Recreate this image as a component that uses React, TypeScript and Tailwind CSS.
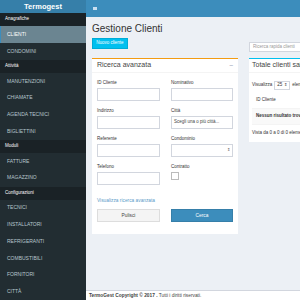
import React from "react";

const sections: { title: string; items: string[] }[] = [
  { title: "Anagrafiche", items: ["CLIENTI", "CONDOMINI"] },
  { title: "Attività", items: ["MANUTENZIONI", "CHIAMATE", "AGENDA TECNICI", "BIGLIETTINI"] },
  { title: "Moduli", items: ["FATTURE", "MAGAZZINO"] },
  { title: "Configurazioni", items: ["TECNICI", "INSTALLATORI", "REFRIGERANTI", "COMBUSTIBILI", "FORNITORI", "CITTÀ"] },
];

function Field({ label, children }: { label: string; children?: React.ReactNode }) {
  return (
    <div className="flex flex-col">
      <div className="h-[6px] flex items-center text-[4.5px] text-[#333] mb-[1.5px]">{label}</div>
      {children ?? <div className="h-[13px] border border-[#d2d6de] bg-white" />}
    </div>
  );
}

export default function App() {
  return (
    <div
      className="w-[300px] h-[300px] overflow-hidden flex bg-[#ecf0f5]"
      style={{ fontFamily: '"Liberation Sans", Arial, sans-serif' }}
    >
      {/* Sidebar */}
      <div className="w-[86px] shrink-0 flex flex-col bg-[#222d32]">
        <div className="h-[16.7px] bg-[#367fa9] flex items-center justify-center text-white font-bold text-[7.5px]">
          Termogest
        </div>
        {sections.map((s) => (
          <div key={s.title} className="flex flex-col">
            <div className="h-[13.3px] bg-[#1a2226] flex items-center pl-[5px] text-[4.5px] text-white">
              {s.title}
            </div>
            {s.items.map((it) => {
              const active = it === "CLIENTI";
              return (
                <div
                  key={it}
                  className={
                    active
                      ? "h-[16.7px] shrink-0 flex items-center pl-[6px] text-[5px] text-white bg-[#6b8591] border-l border-[#3c8dbc]"
                      : "h-[16.7px] shrink-0 flex items-center pl-[7px] text-[5px] text-[#b8c7ce]"
                  }
                >
                  {it}
                </div>
              );
            })}
          </div>
        ))}
      </div>

      {/* Main */}
      <div className="flex-1 flex flex-col min-w-0">
        <div className="h-[16.7px] shrink-0 bg-[#3c8dbc] flex items-center pl-[7px]">
          <div className="w-[3.5px] h-[3px] bg-[#c9dff0]" />
        </div>
        <div className="flex-1 flex flex-col pl-[6px] pt-[5px] overflow-hidden">
          <div className="h-[14px] flex items-center text-[10px] text-[#333] leading-none">Gestione Clienti</div>
          <div className="flex gap-[11px] mt-[2.5px]">
            {/* Left column */}
            <div className="w-[146px] shrink-0 flex flex-col">
              <div className="h-[19.5px]">
                <div className="w-[36px] h-[11px] bg-[#00c0ef] border border-[#00acd6] flex items-center justify-center text-white text-[4.5px]">
                  Nuovo cliente
                </div>
              </div>
              <div className="bg-white border-t-[1.7px] border-[#f39c12] flex flex-col">
                <div className="h-[14.5px] flex items-center justify-between px-[5px] border-b border-[#f4f4f4]">
                  <span className="text-[7px] text-[#444]">Ricerca avanzata</span>
                  <span className="text-[7px] text-[#97a0b3] leading-none">−</span>
                </div>
                <div className="px-[5px] pt-[7px] pb-[12px] flex flex-col">
                  <div className="grid grid-cols-[63px_62px] gap-x-[11px] gap-y-[7.5px]">
                    <Field label="ID Cliente" />
                    <Field label="Nominativo" />
                    <Field label="Indirizzo" />
                    <Field label="Città">
                      <div className="h-[13px] border border-[#d2d6de] bg-white flex items-center pl-[2px] text-[4.5px] text-[#444]">
                        Scegli una o più città...
                      </div>
                    </Field>
                    <Field label="Referente" />
                    <Field label="Condominio">
                      <div className="h-[13px] border border-[#d2d6de] bg-white flex items-center justify-end pr-[2px] text-[4px] text-[#555]">
                        ⇕
                      </div>
                    </Field>
                    <Field label="Telefono" />
                    <Field label="Contratto">
                      <div className="w-[8px] h-[8px] border border-[#bbb] bg-white" />
                    </Field>
                  </div>
                  <div className="mt-[13px] h-[6px] flex items-center text-[4.8px] text-[#5a9bc8]">
                    Visualizza ricerca avanzata
                  </div>
                  <div className="grid grid-cols-[63px_62px] gap-x-[11px] mt-[5px]">
                    <div className="h-[13px] bg-[#f4f4f4] border border-[#ddd] flex items-center justify-center text-[4.8px] text-[#444]">
                      Pulisci
                    </div>
                    <div className="h-[13px] bg-[#3c8dbc] border border-[#367fa9] flex items-center justify-center text-[4.8px] text-white">
                      Cerca
                    </div>
                  </div>
                </div>
              </div>
            </div>

            {/* Right column */}
            <div className="w-[146px] shrink-0 flex flex-col">
              <div className="h-[19.5px] pt-[4px]">
                <div className="h-[10px] bg-white border border-[#d2d6de] flex items-center pl-[3px] text-[4.5px] text-[#999] whitespace-nowrap overflow-hidden">
                  Ricerca rapida clienti
                </div>
              </div>
              <div className="bg-white border-t-[1.7px] border-[#00c0ef] flex flex-col">
                <div className="h-[14px] flex items-center px-[3px] border-b border-[#f4f4f4]">
                  <span className="text-[7px] text-[#444] whitespace-nowrap">Totale clienti salvati: 0</span>
                </div>
                <div className="px-[3px] pt-[7px] pb-[3px] flex flex-col">
                  <div className="h-[11px] flex items-center gap-[2px] text-[4.5px] text-[#333] whitespace-nowrap">
                    <span>Visualizza</span>
                    <span className="h-[9px] px-[2px] border border-[#d2d6de] flex items-center gap-[2px]">
                      25 <span className="text-[4px]">⇕</span>
                    </span>
                    <span>elementi</span>
                  </div>
                  <div className="mt-[2.5px] h-[16px] flex items-center pl-[4px] text-[4.5px] text-[#333] border-b border-[#f4f4f4]">
                    ID Cliente
                  </div>
                  <div className="h-[16px] flex items-center pl-[4px] text-[4.5px] font-bold text-[#333] bg-[#f9f9f9] border-b border-[#f4f4f4] whitespace-nowrap">
                    Nessun risultato trovato
                  </div>
                  <div className="mt-[2px] h-[12px] flex items-center text-[4.5px] text-[#333] whitespace-nowrap">
                    Vista da 0 a 0 di 0 elementi
                  </div>
                </div>
              </div>
            </div>
          </div>
        </div>
        <div className="h-[10px] shrink-0 bg-white border-t border-[#d2d6de] flex items-center pl-[3px] text-[4.8px] text-[#444] whitespace-nowrap">
          <span className="font-bold">TermoGest Copyright © 2017 .</span>
          <span>&nbsp;Tutti i diritti riservati.</span>
        </div>
      </div>
    </div>
  );
}
